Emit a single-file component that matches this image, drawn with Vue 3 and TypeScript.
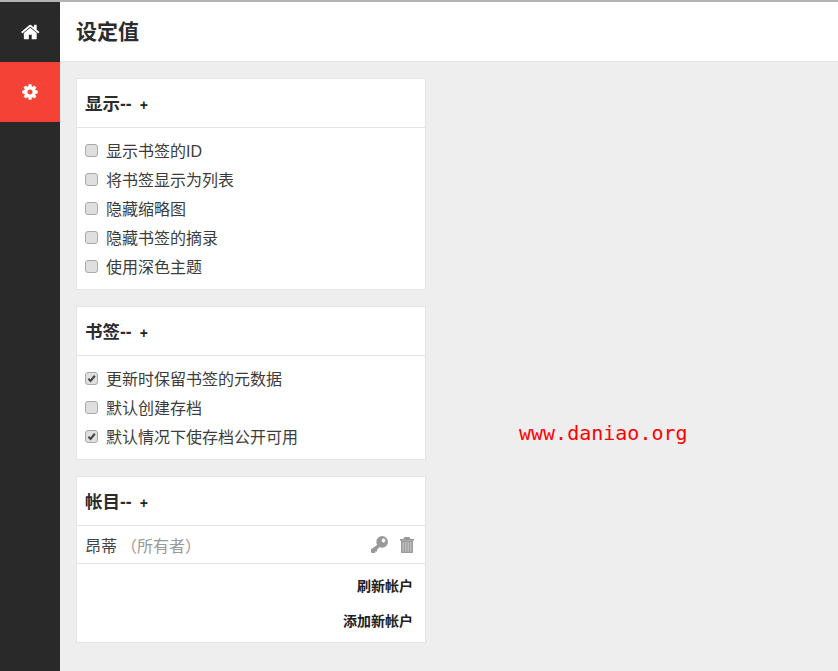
<script setup lang="ts">
const display = [
  { label: '显示书签的ID', on: false },
  { label: '将书签显示为列表', on: false },
  { label: '隐藏缩略图', on: false },
  { label: '隐藏书签的摘录', on: false },
  { label: '使用深色主题', on: false },
]
const bookmarks = [
  { label: '更新时保留书签的元数据', on: true },
  { label: '默认创建存档', on: false },
  { label: '默认情况下使存档公开可用', on: true },
]
const sections = [
  { title: '显示--', rows: display },
  { title: '书签--', rows: bookmarks },
]
</script>

<template>
  <div class="shell">
    <nav class="side">
      <a class="nav-item">
        <svg class="nav-icon" viewBox="0 0 1792 1792"><path fill="currentColor" d="M1408 992v480q0 26-19 45t-45 19h-384v-384h-256v384h-384q-26 0-45-19t-19-45v-480q0-1 .5-3t.5-3l575-474 575 474q1 2 1 6zm223-69l-62 74q-8 9-21 11h-3q-13 0-21-7l-692-577-692 577q-12 8-24 7-13-2-21-11l-62-74q-8-10-7-23.500t11-21.500l719-599q32-26 76-26t76 26l244 204v-195q0-14 9-23t23-9h192q14 0 23 9t9 23v408l219 182q10 8 11 21.500t-7 23.500z"/></svg>
      </a>
      <a class="nav-item active">
        <svg class="nav-icon" viewBox="0 0 1792 1792"><path fill="currentColor" d="M1152 896q0-106-75-181t-181-75-181 75-75 181 75 181 181 75 181-75 75-181zm512-109v222q0 12-8 23t-20 13l-185 28q-19 54-39 91 35 50 107 138 10 12 10 25t-9 23q-27 37-99 108t-94 71q-12 0-26-9l-138-108q-44 23-91 38-16 136-29 186-7 28-36 28h-222q-14 0-24.500-8.500t-11.500-21.500l-28-184q-49-16-90-37l-141 107q-10 9-25 9-14 0-25-11-126-114-165-168-7-10-7-23 0-12 8-23 15-21 51-66.500t54-70.500q-27-50-41-99l-183-27q-13-2-21-12.500t-8-23.500v-222q0-12 8-23t19-13l186-28q14-46 39-92-40-57-107-138-10-12-10-24 0-10 9-23 26-36 98.500-107.500t94.500-71.500q13 0 26 10l138 107q44-23 91-38 16-136 29-186 7-28 36-28h222q14 0 24.500 8.500t11.500 21.500l28 184q49 16 90 37l142-107q9-9 24-9 13 0 25 10 129 119 165 170 7 8 7 22 0 12-8 23-15 21-51 66.500t-54 70.500q26 50 41 98l183 28q13 2 21 12.500t8 23.500z"/></svg>
      </a>
    </nav>
    <div class="content">
      <header class="top"><h1>设定值</h1></header>
      <main class="main">
        <section v-for="s in sections" :key="s.title" class="card">
          <h2 class="card-head">{{ s.title }}<span class="plus">+</span></h2>
          <div class="rows">
            <label v-for="r in s.rows" :key="r.label" class="row">
              <span class="check">
                <svg v-if="r.on" viewBox="0 0 12 12"><path d="M2.600 6.200 5 8.600 9.600 3" fill="none" stroke="#444" stroke-width="2.200"/></svg>
              </span>
              <span class="row-text">{{ r.label }}</span>
            </label>
          </div>
        </section>
        <section class="card">
          <h2 class="card-head">帐目--<span class="plus">+</span></h2>
          <div class="account">
            <span class="name">昂蒂</span><span class="role">（所有者）</span>
            <span class="tools">
              <svg class="key" viewBox="0 0 16 16">
                <path fill="currentColor" fill-rule="evenodd" d="M10.500 0a5.500 5.500 0 1 1 0 11a5.500 5.500 0 0 1 0-11zM11.800 2.400a1.800 1.800 0 1 0 0 3.600a1.800 1.800 0 0 0 0-3.600z"/>
                <path fill="currentColor" d="M7 7.500 9 9.500 5.800 12.700V14.500H4V16H0.800L0 15.200V12.500z"/>
              </svg>
              <svg class="trash" viewBox="0 0 14 16">
                <path fill="currentColor" d="M4.500 0h5L10.500 2H14V3.800H0V2H3.500z"/>
                <rect x="1.800" y="4.600" width="10.400" height="10.600" fill="#c4c4c4" stroke="currentColor" stroke-width="1.500"/>
                <path d="M4.500 6v8M7 6v8M9.500 6v8" stroke="currentColor" stroke-width="1.200" fill="none"/>
              </svg>
            </span>
          </div>
          <div class="actions">
            <a class="action">刷新帐户</a>
            <a class="action">添加新帐户</a>
          </div>
        </section>
      </main>
    </div>
    <div class="watermark">www.daniao.org</div>
  </div>
</template>

<style>
html, body { margin: 0; background: #eee; }
</style>

<style scoped>
.shell {
  position: relative;
  display: flex;
  height: 671px;
  overflow: hidden;
  box-sizing: border-box;
  border-top: 2px solid #b4b4b4;
  font-family: "Liberation Sans", "Noto Sans CJK SC", sans-serif;
  color: #333;
  background: #eee;
}
.side { width: 60px; flex: none; background: #292929; }
.nav-item { display: flex; align-items: center; justify-content: center; height: 60px; color: #fff; }
.nav-item.active { background: #f44336; }
.nav-icon { width: 20px; height: 20px; margin-left: 1px; }
.nav-item.active .nav-icon { width: 18px; height: 18px; margin-left: 0; }
.content { flex: 1; min-width: 0; }
.top {
  height: 59px;
  background: #fff;
  border-bottom: 1px solid #e5e5e5;
  display: flex;
  align-items: center;
  padding-left: 16px;
}
h1 { margin: 0; font-size: 21px; line-height: 30px; font-weight: 700; color: #2c2c2c; }
.main { padding: 16px; display: flex; flex-direction: column; gap: 16px; width: 350px; }
.card { background: #fff; border: 1px solid #e3e3e3; }
.card-head {
  margin: 0;
  height: 48px;
  padding-left: 8px;
  border-bottom: 1px solid #e3e3e3;
  font-size: 17.500px;
  font-weight: 700;
  line-height: 50px;
  color: #2c2c2c;
}
.plus { margin-left: 8px; font-size: 14px; color: #222; }
.rows { padding: 9px 8px 7px; }
.row { display: flex; align-items: center; height: 29px; font-size: 16px; color: #3c3c3c; }
.row-text { margin-bottom: 4px; }
.check {
  width: 11px;
  height: 11px;
  margin-right: 8px;
  margin-top: -2px;
  flex: none;
  border: 1px solid #aaa;
  border-radius: 3px;
  background: #dfdfdf;
  display: flex;
}
.check svg { width: 11px; height: 11px; }
.account {
  display: flex;
  align-items: center;
  height: 37px;
  padding: 0 11px 0 8px;
  border-bottom: 1px solid #e3e3e3;
  font-size: 16px;
}
.name { color: #444; }
.role { color: #999; margin-left: 4px; }
.tools { margin-left: auto; display: flex; align-items: center; gap: 12px; color: #999; }
.key { width: 17px; height: 17px; display: block; }
.trash { width: 14px; height: 16px; display: block; }
.actions { display: flex; flex-direction: column; align-items: flex-end; padding: 5px 12px 3px 8px; }
.action { height: 35px; line-height: 35px; font-size: 14px; font-weight: 700; color: #222; }
.watermark {
  position: absolute;
  left: 519px;
  top: 419px;
  font-family: "DejaVu Sans Mono", monospace;
  font-size: 20px;
  line-height: 24px;
  color: #f00;
}
</style>
